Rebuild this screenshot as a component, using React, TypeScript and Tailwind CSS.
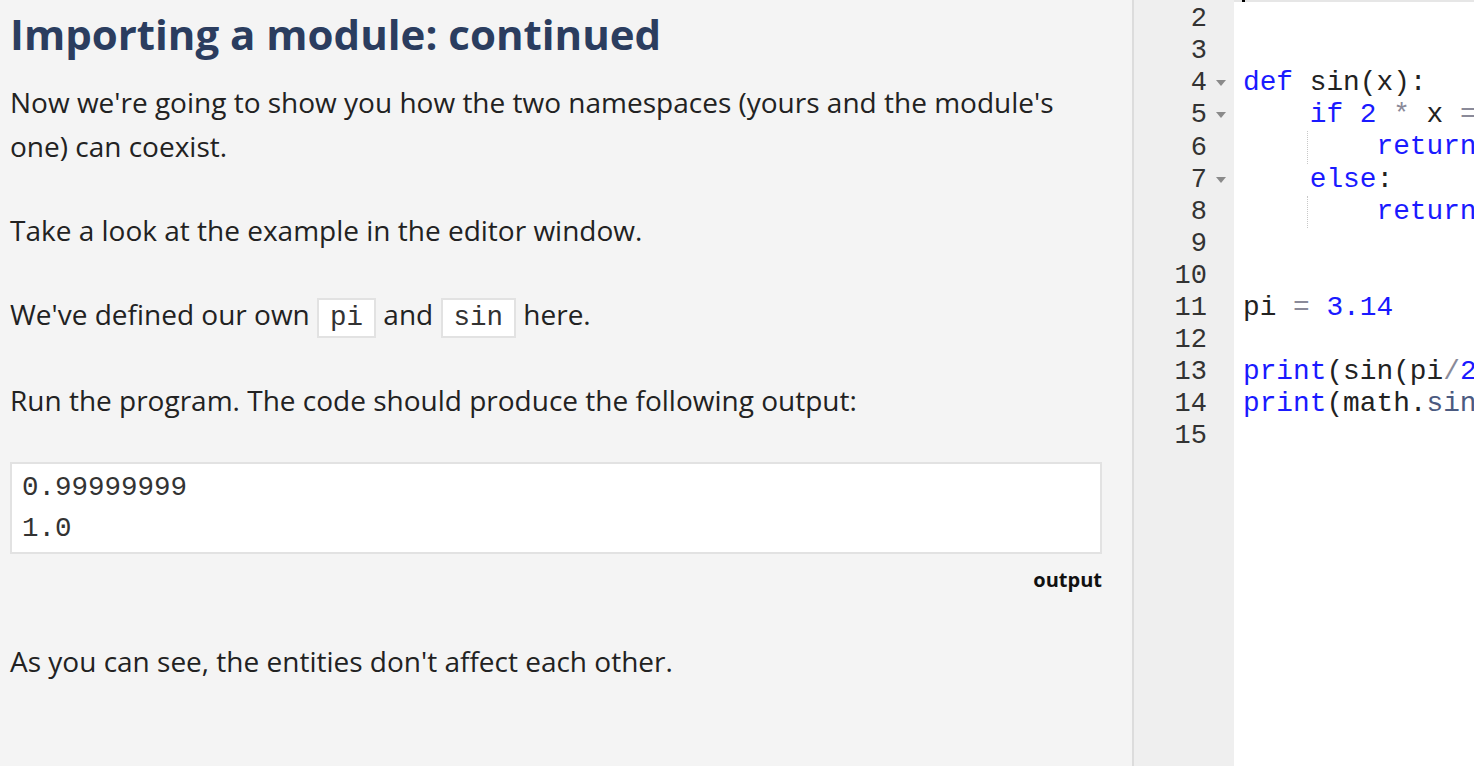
import React from "react";

const sans = { fontFamily: '"Open Sans", "Noto Sans", sans-serif' };
const mono = { fontFamily: '"Liberation Mono", "DejaVu Sans Mono", monospace' };

type Tok = [string, string];
const K = "text-[#1a1aff]";
const N = "text-[#222]";
const G = "text-[#8a8a99]";

const lines: { n: number; fold?: boolean; guide?: boolean; toks: Tok[] }[] = [
  { n: 1, toks: [] },
  { n: 2, toks: [] },
  { n: 3, toks: [] },
  { n: 4, fold: true, toks: [[K, "def"], [N, " sin(x):"]] },
  { n: 5, fold: true, toks: [[N, "    "], [K, "if"], [N, " "], [K, "2"], [N, " "], [G, "*"], [N, " x "], [G, "=="]] },
  { n: 6, guide: true, toks: [[N, "        "], [K, "return"]] },
  { n: 7, fold: true, toks: [[N, "    "], [K, "else"], [N, ":"]] },
  { n: 8, guide: true, toks: [[N, "        "], [K, "return"]] },
  { n: 9, toks: [] },
  { n: 10, toks: [] },
  { n: 11, toks: [[N, "pi "], [G, "="], [N, " "], [K, "3.14"]] },
  { n: 12, toks: [] },
  { n: 13, toks: [[K, "print"], [N, "(sin(pi"], [G, "/"], [K, "2"], [N, "))"]] },
  { n: 14, toks: [[K, "print"], [N, "(math."], ["text-[#4b5a80]", "sin"], [N, "(pi))"]] },
  { n: 15, toks: [] },
];

function Code({ children }: { children: React.ReactNode }) {
  return (
    <span
      className="inline-block border-2 border-[#e2e2e2] bg-white px-[11px] leading-[36px] text-[27.5px] text-[#333] align-middle"
      style={mono}
    >
      {children}
    </span>
  );
}

export default function App() {
  return (
    <div className="flex h-[766px] w-[1474px] overflow-hidden bg-white">
      <div className="w-[1132px] shrink-0 bg-[#f4f4f4] pl-[10px] pr-[30px] text-[#222]" style={sans}>
        <h1 className="pt-[8px] text-[42px] font-bold leading-[52px] text-[#2b3d5f]">
          Importing a module: continued
        </h1>
        <div className="mt-[20px] text-[28px] leading-[44px]">
          <p>Now we're going to show you how the two namespaces (yours and the module's one) can coexist.</p>
          <p className="mt-[40px]">Take a look at the example in the editor window.</p>
          <p className="mt-[40px]">
            We've defined our own <Code>pi</Code> and <Code>sin</Code> here.
          </p>
          <p className="mt-[40px]">Run the program. The code should produce the following output:</p>
        </div>
        <div
          className="mt-[40px] border-2 border-[#e2e2e2] bg-white px-[10px] py-[3px] text-[27.5px] leading-[41px] text-[#333]"
          style={mono}
        >
          <div>0.99999999</div>
          <div>1.0</div>
        </div>
        <div className="mt-[12px] text-right text-[20px] font-bold leading-[28px] text-[#111]">output</div>
        <p className="mt-[45px] text-[28px] leading-[44px]">As you can see, the entities don't affect each other.</p>
      </div>
      <div className="w-[2px] shrink-0 bg-[#dcdcdc]" />
      <div className="relative flex min-w-0 flex-1" style={mono}>
        <div className="w-[100px] shrink-0 bg-[#efefef]">
          <div className="mt-[-29px]">
            {lines.map((l) => (
              <div key={l.n} className="flex h-[32.1px] items-center text-[27px] leading-[32px] text-[#333]">
                <span className="w-[73px] text-right">{l.n}</span>
                <span className="flex w-[27px] justify-center">
                  {l.fold && (
                    <svg width="10" height="6" viewBox="0 0 10 6">
                      <path d="M0 0 L10 0 L5 6 Z" fill="#8a8a8a" />
                    </svg>
                  )}
                </span>
              </div>
            ))}
          </div>
        </div>
        <div className="relative min-w-0 flex-1 overflow-hidden">
          <div className="absolute left-0 right-0 top-0 h-[2px] bg-[#e6e6e6]" />
          <div className="absolute left-[8px] top-0 h-[2px] w-[3px] bg-black" />
          <div className="mt-[-29px] pl-[9px]">
            {lines.map((l) => (
              <div
                key={l.n}
                className="relative h-[32.1px] whitespace-pre text-[27.8px] leading-[32.1px]"
              >
                {l.guide && (
                  <span className="absolute left-[64px] top-0 h-full border-l border-dotted border-[#c8c8c8]" />
                )}
                {l.toks.map((t, i) => (
                  <span key={i} className={t[0]}>
                    {t[1]}
                  </span>
                ))}
              </div>
            ))}
          </div>
        </div>
      </div>
    </div>
  );
}
